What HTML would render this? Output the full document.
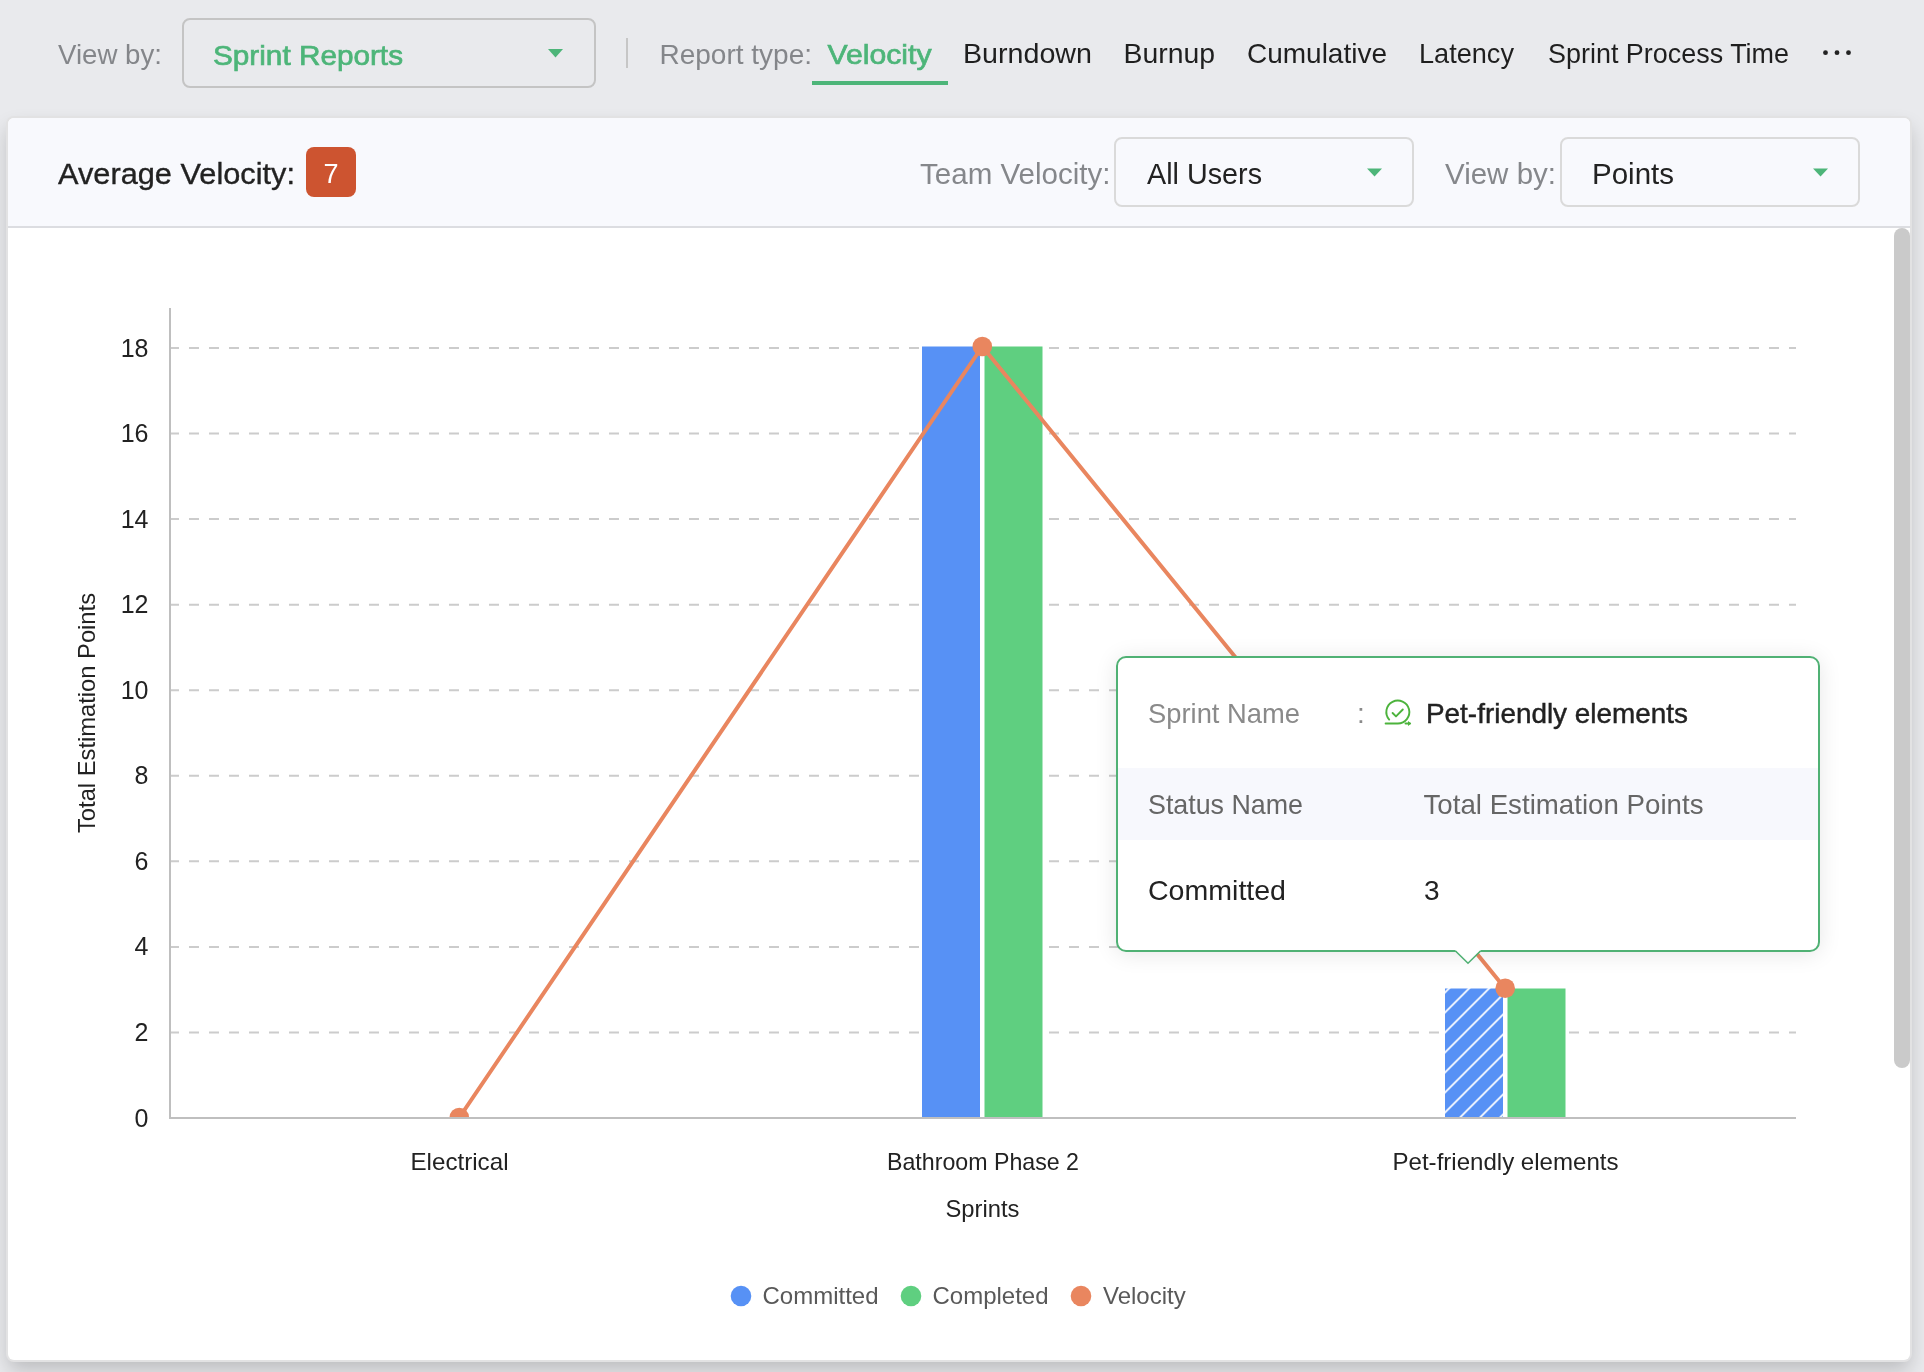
<!DOCTYPE html>
<html><head><meta charset="utf-8">
<style>
html,body{margin:0;padding:0;}
body{width:1924px;height:1372px;overflow:hidden;position:relative;background:#e9eaed;font-family:"Liberation Sans",sans-serif;}
.abs{position:absolute;}
#card{left:8px;top:118px;width:1902px;height:1242px;background:#fff;border-radius:6px;box-shadow:0 0 0 2px #e2e2e3,0 10px 20px rgba(0,0,0,0.2);}
#hdr{left:8px;top:118px;width:1902px;height:108px;background:#f8f9fd;border-radius:6px 6px 0 0;border-bottom:2px solid #dcdde1;}
#dd1{left:182px;top:18px;width:410px;height:66px;border:2px solid #c4c4c4;border-radius:8px;}
#sep{left:626px;top:38px;width:2px;height:30px;background:#c6c6c6;}
#ul{left:812px;top:81px;width:136px;height:4px;background:#4db579;}
#dd2{left:1114px;top:137px;width:296px;height:66px;border:2px solid #dadada;border-radius:8px;}
#dd3{left:1560px;top:137px;width:296px;height:66px;border:2px solid #dadada;border-radius:8px;}
#badge{left:306px;top:147px;width:50px;height:50px;background:#cd5430;border-radius:8px;}
#sb{left:1894px;top:228px;width:16px;height:840px;background:#cacaca;border-radius:8px;}
#tip{left:1116px;top:656px;width:700px;height:292px;border:2px solid #50b174;border-radius:10px;background:#fff;box-shadow:0 2px 22px rgba(0,0,0,0.10);}
#tiprow{left:1118px;top:768px;width:700px;height:72px;background:#f7f8fd;}
svg{position:absolute;left:0;top:0;will-change:transform;}
</style></head>
<body>
<div class="abs" id="dd1"></div>
<div class="abs" id="sep"></div>
<div class="abs" id="ul"></div>
<div class="abs" id="card"></div>
<div class="abs" id="hdr"></div>
<div class="abs" id="dd2"></div>
<div class="abs" id="dd3"></div>
<div class="abs" id="badge"></div>
<div class="abs" id="sb"></div>

<svg width="1924" height="1372" viewBox="0 0 1924 1372" style="font-family:'Liberation Sans',sans-serif">
<defs>
<clipPath id="plot"><rect x="170" y="200" width="1700" height="917.5"/></clipPath>
<pattern id="hatch" patternUnits="userSpaceOnUse" width="20" height="20" patternTransform="translate(1445 992.5)">
<rect width="20" height="20" fill="#5791f5"/>
<path d="M-5 25 L25 -5 M-15 15 L15 -15 M5 35 L35 5" stroke="#fff" stroke-width="1.7"/>
</pattern>
</defs>
<!-- top bar text -->
<g font-size="28">
<text x="58" y="64" fill="#84868a" textLength="104" lengthAdjust="spacingAndGlyphs">View by:</text>
<text x="213" y="64.5" fill="#4db579" stroke="#4db579" stroke-width="0.7" textLength="190" lengthAdjust="spacingAndGlyphs">Sprint Reports</text>
<text x="659.5" y="64" fill="#84868a" textLength="152.5" lengthAdjust="spacingAndGlyphs">Report type:</text>
<text x="827.5" y="64" fill="#4db579" stroke="#4db579" stroke-width="0.7" textLength="104" lengthAdjust="spacingAndGlyphs">Velocity</text>
<text x="963" y="63" fill="#1f1f1f" textLength="129" lengthAdjust="spacingAndGlyphs">Burndown</text>
<text x="1123.5" y="63" fill="#1f1f1f" textLength="91.5" lengthAdjust="spacingAndGlyphs">Burnup</text>
<text x="1247" y="63" fill="#1f1f1f" textLength="140" lengthAdjust="spacingAndGlyphs">Cumulative</text>
<text x="1419" y="63" fill="#1f1f1f" textLength="95" lengthAdjust="spacingAndGlyphs">Latency</text>
<text x="1548" y="63" fill="#1f1f1f" textLength="241" lengthAdjust="spacingAndGlyphs">Sprint Process Time</text>
</g>
<path d="M548 49 H563 L555.5 57.5 Z" fill="#4db579"/>
<circle cx="1825.5" cy="52.7" r="2.4" fill="#222"/><circle cx="1837" cy="52.7" r="2.4" fill="#222"/><circle cx="1848.5" cy="52.7" r="2.4" fill="#222"/>

<!-- card header -->
<g font-size="30">
<text x="58" y="184" fill="#222" stroke="#222" stroke-width="0.35" textLength="237" lengthAdjust="spacingAndGlyphs">Average Velocity:</text>
<text x="920" y="184" fill="#85878b" textLength="190.5" lengthAdjust="spacingAndGlyphs">Team Velocity:</text>
<text x="1147" y="184" fill="#222" textLength="115" lengthAdjust="spacingAndGlyphs">All Users</text>
<text x="1445" y="184" fill="#85878b" textLength="111" lengthAdjust="spacingAndGlyphs">View by:</text>
<text x="1592" y="184" fill="#222" textLength="82" lengthAdjust="spacingAndGlyphs">Points</text>
</g>
<text x="331" y="182.5" fill="#fff" font-size="27" text-anchor="middle">7</text>
<path d="M1367 168.5 H1382 L1374.5 176.5 Z" fill="#4db579"/>
<path d="M1813 168.5 H1828 L1820.5 176.5 Z" fill="#4db579"/>

<!-- grid -->
<g stroke="#cccccc" stroke-width="2" stroke-dasharray="10 10">
<line x1="169" y1="348" x2="1796" y2="348"/>
<line x1="169" y1="433.6" x2="1796" y2="433.6"/>
<line x1="169" y1="519.1" x2="1796" y2="519.1"/>
<line x1="169" y1="604.7" x2="1796" y2="604.7"/>
<line x1="169" y1="690.2" x2="1796" y2="690.2"/>
<line x1="169" y1="775.8" x2="1796" y2="775.8"/>
<line x1="169" y1="861.3" x2="1796" y2="861.3"/>
<line x1="169" y1="946.9" x2="1796" y2="946.9"/>
<line x1="169" y1="1032.4" x2="1796" y2="1032.4"/>
</g>
<!-- bars -->
<rect x="922" y="346.5" width="58" height="771" fill="#5791f5"/>
<rect x="984.5" y="346.5" width="58" height="771" fill="#5fcf80"/>
<rect x="1445" y="988.5" width="58" height="129" fill="url(#hatch)"/>
<rect x="1507.5" y="988.5" width="58" height="129" fill="#5fcf80"/>
<!-- axes -->
<line x1="170" y1="308" x2="170" y2="1119" stroke="#bfbfbf" stroke-width="2"/>
<!-- velocity line -->
<g clip-path="url(#plot)">
<polyline points="459.3,1117.5 982.3,346.5 1505.2,988.5" fill="none" stroke="#e9865f" stroke-width="4" stroke-linejoin="round"/>
<circle cx="459.3" cy="1117.5" r="9.8" fill="#e9865f"/>
<circle cx="982.3" cy="346.5" r="9.8" fill="#e9865f"/>
<circle cx="1505.2" cy="988.3" r="9.8" fill="#e9865f"/>
</g>
<line x1="169" y1="1118" x2="1796" y2="1118" stroke="#bfbfbf" stroke-width="2"/>

<!-- y ticks -->
<g font-size="25" fill="#222" text-anchor="end">
<text x="148.5" y="356.5">18</text>
<text x="148.5" y="442">16</text>
<text x="148.5" y="527.5">14</text>
<text x="148.5" y="613">12</text>
<text x="148.5" y="698.5">10</text>
<text x="148.5" y="784">8</text>
<text x="148.5" y="869.5">6</text>
<text x="148.5" y="955">4</text>
<text x="148.5" y="1041">2</text>
<text x="148.5" y="1126.5">0</text>
</g>
<text x="0" y="0" font-size="24" fill="#222" text-anchor="middle" transform="translate(95.4 713) rotate(-90)" textLength="240" lengthAdjust="spacingAndGlyphs">Total Estimation Points</text>
<!-- x labels -->
<g font-size="24" fill="#222">
<text x="410.5" y="1170" textLength="98" lengthAdjust="spacingAndGlyphs">Electrical</text>
<text x="887" y="1170" textLength="192" lengthAdjust="spacingAndGlyphs">Bathroom Phase 2</text>
<text x="1392.5" y="1170" textLength="226" lengthAdjust="spacingAndGlyphs">Pet-friendly elements</text>
<text x="945.5" y="1216.5" textLength="74" lengthAdjust="spacingAndGlyphs">Sprints</text>
</g>
<!-- legend -->
<circle cx="741" cy="1296" r="10.3" fill="#5791f5"/>
<circle cx="911" cy="1296" r="10.3" fill="#5fcf80"/>
<circle cx="1081" cy="1296" r="10.3" fill="#e9865f"/>
<g font-size="24" fill="#595959">
<text x="762.5" y="1304">Committed</text>
<text x="932.5" y="1304">Completed</text>
<text x="1103" y="1304">Velocity</text>
</g>
</svg>

<div class="abs" id="tip"></div>
<div class="abs" id="tiprow"></div>
<svg width="1924" height="1372" viewBox="0 0 1924 1372" style="font-family:'Liberation Sans',sans-serif">
<!-- tooltip arrow -->
<path d="M1455 950 L1468 962.5 L1481 950 Z" fill="#fff"/>
<path d="M1455.5 951 L1468 963.2 L1480.5 951" fill="none" stroke="#50b174" stroke-width="1.6"/>
<g font-size="28">
<text x="1148" y="723" fill="#8a8a8a" textLength="152" lengthAdjust="spacingAndGlyphs">Sprint Name</text>
<text x="1357" y="723" fill="#8a8a8a">:</text>
<text x="1426" y="723" fill="#222" stroke="#222" stroke-width="0.45" textLength="262" lengthAdjust="spacingAndGlyphs">Pet-friendly elements</text>
<text x="1148" y="814" fill="#666" textLength="155" lengthAdjust="spacingAndGlyphs">Status Name</text>
<text x="1423.5" y="814" fill="#666" textLength="280" lengthAdjust="spacingAndGlyphs">Total Estimation Points</text>
<text x="1148" y="900" fill="#222" textLength="138" lengthAdjust="spacingAndGlyphs">Committed</text>
<text x="1424" y="900" fill="#222">3</text>
</g>
<!-- sprint icon -->
<g fill="none" stroke="#4cb33c" stroke-width="1.9" stroke-linecap="round" stroke-linejoin="round">
<path d="M1385.6 723.5 H1397.8 A11.5 11.5 0 1 0 1389.2 719.6"/>
<path d="M1392.6 713 L1396 716.4 L1402.8 709.5"/>
<path d="M1405.5 723.5 H1410"/>
</g>
<path d="M1408 720.9 L1411.2 723.5 L1408 726.1 Z" fill="#4cb33c"/>
</svg>
</body></html>
